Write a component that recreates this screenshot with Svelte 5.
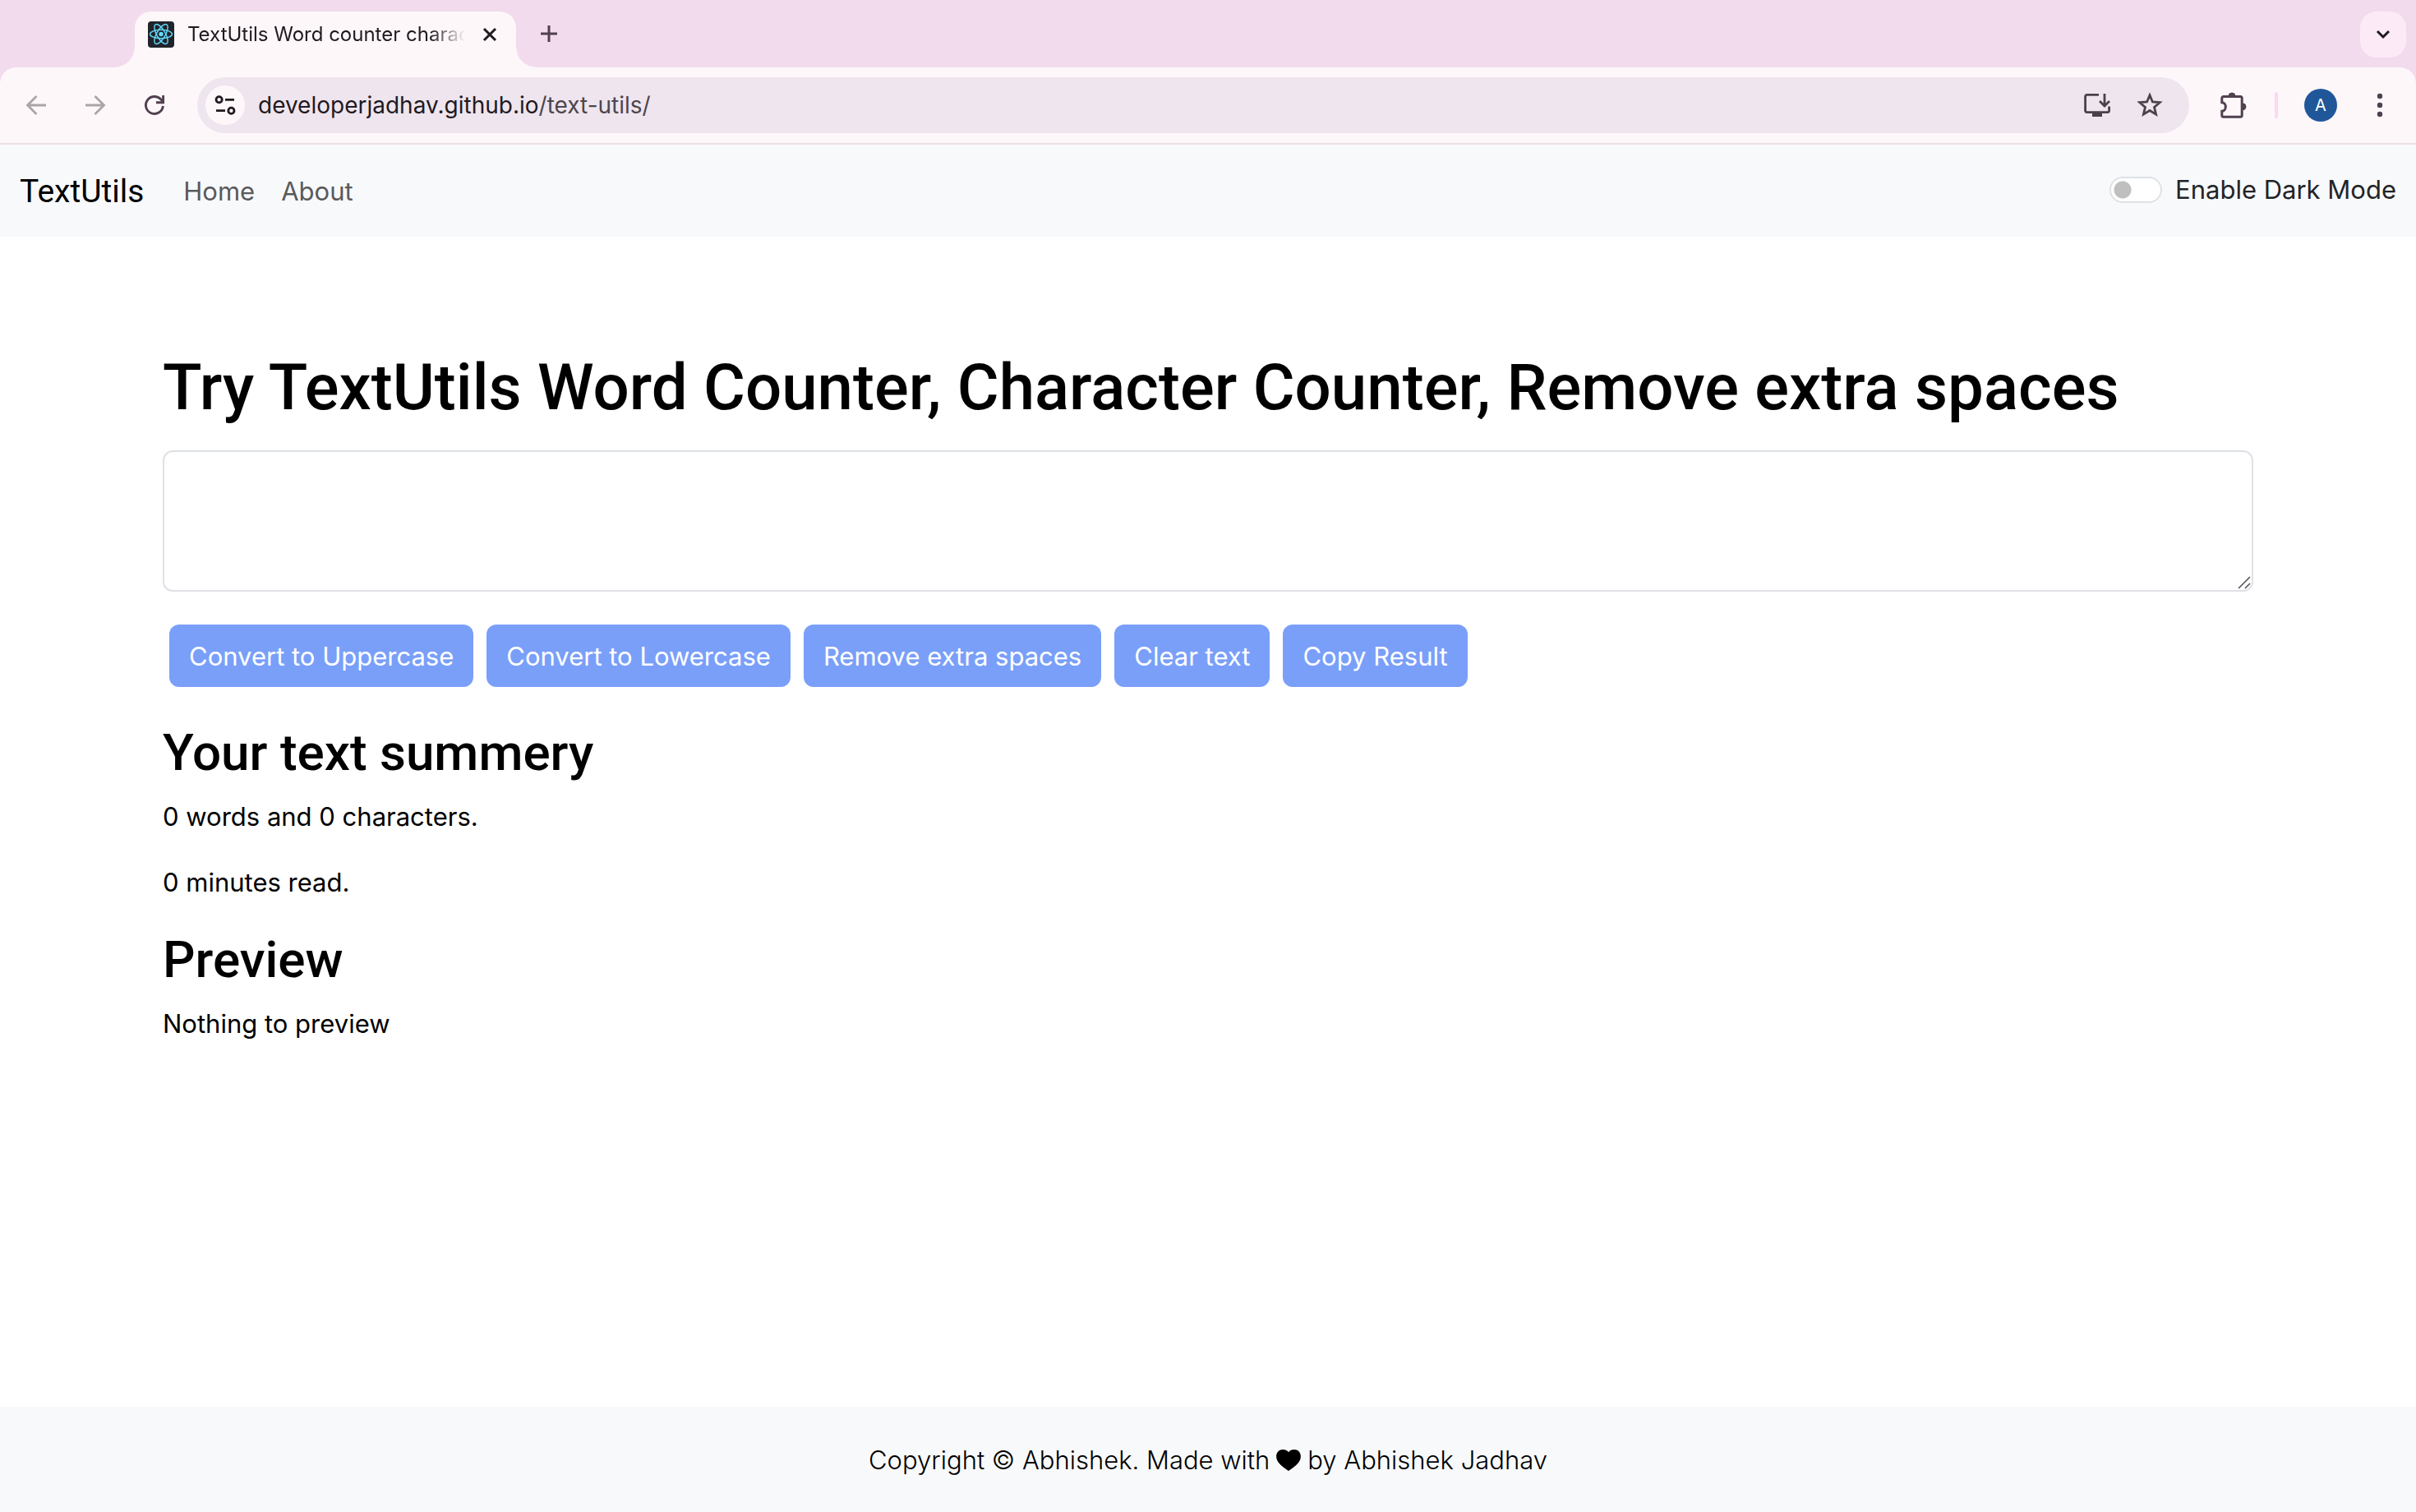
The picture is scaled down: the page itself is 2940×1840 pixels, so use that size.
<script>
  let text = $state('');
  let dark = $state(false);

  const words = $derived(text.split(/\s+/).filter(Boolean).length);
  const minutes = $derived(0.008 * words);

  const actions = [
    { label: 'Convert to Uppercase', run: () => (text = text.toUpperCase()) },
    { label: 'Convert to Lowercase', run: () => (text = text.toLowerCase()) },
    { label: 'Remove extra spaces', run: () => (text = text.split(/[ ]+/).join(' ')) },
    { label: 'Clear text', run: () => (text = '') },
    { label: 'Copy Result', run: () => navigator.clipboard?.writeText(text) }
  ];
</script>

<div class="window">
  <div class="tabstrip">
    <div class="tab">
      <svg class="favicon" viewBox="0 0 32 32" aria-hidden="true">
        <rect width="32" height="32" rx="4" fill="#20232a" />
        <g fill="none" stroke="#61dafb" stroke-width="1.4">
          <ellipse cx="16" cy="15.5" rx="13.5" ry="5.2" />
          <ellipse cx="16" cy="15.5" rx="13.5" ry="5.2" transform="rotate(60 16 15.5)" />
          <ellipse cx="16" cy="15.5" rx="13.5" ry="5.2" transform="rotate(120 16 15.5)" />
        </g>
        <circle cx="16" cy="15.5" r="2.7" fill="#61dafb" />
      </svg>
      <span class="tab-title">TextUtils Word counter charac</span>
      <button class="icon close" aria-label="Close tab">
        <svg viewBox="0 0 32 32"><path d="M9 9l14 14M23 9L9 23" stroke="#1f1a1f" stroke-width="3" /></svg>
      </button>
    </div>
    <button class="icon new-tab" aria-label="New tab">
      <svg viewBox="0 0 32 32"><path d="M16 6v20M6 16h20" stroke="#51404f" stroke-width="3" /></svg>
    </button>
    <button class="tab-search" aria-label="Search tabs">
      <svg viewBox="0 0 32 32"><path d="M9 12l7 7 7-7" stroke="#1f1a1f" stroke-width="3" /></svg>
    </button>
  </div>

  <div class="toolbar">
    <div class="nav-buttons">
      <button class="icon" aria-label="Back" disabled>
        <svg viewBox="0 0 32 32"><path d="M28 16H6M16.5 5L5.5 16l11 11" stroke="#ada4a9" stroke-width="2.8" /></svg>
      </button>
      <button class="icon" aria-label="Forward" disabled>
        <svg viewBox="0 0 32 32"><path d="M4 16h22M15.5 5l11 11-11 11" stroke="#ada4a9" stroke-width="2.8" /></svg>
      </button>
      <button class="icon" aria-label="Reload">
        <svg viewBox="0 0 32 32">
          <path d="M26.4 17A10.5 10.5 0 1 1 23.6 8.8L26 11.2" stroke="#51404f" stroke-width="2.9" />
          <path d="M18 12.7h8.6V4" stroke="#51404f" stroke-width="2.9" />
        </svg>
      </button>
    </div>

    <div class="omnibox">
      <button class="site-info" aria-label="View site information">
        <svg viewBox="0 0 32 32">
          <g stroke="#1f1a1f" stroke-width="2.8">
            <circle cx="8.6" cy="9.3" r="3.6" />
            <path d="M16 9.3h11M5 22.7h11" />
            <circle cx="23.4" cy="22.7" r="3.6" />
          </g>
        </svg>
      </button>
      <a class="url" href="#top">developerjadhav.github.io<span>/text-utils/</span></a>
      <button class="icon" aria-label="Install app">
        <svg viewBox="0 0 32 32">
          <path d="M18 3.4H3.6a2 2 0 0 0-2 2V22.6a2 2 0 0 0 2 2H28.6a2 2 0 0 0 2-2V17.5" stroke="#4a4248" stroke-width="2.8" />
          <path d="M10 25h12v5H10z" fill="#4a4248" />
          <path d="M25 2v14M19 11l6 6 6-6" stroke="#4a4248" stroke-width="2.8" />
        </svg>
      </button>
      <button class="icon" aria-label="Bookmark this tab">
        <svg viewBox="0 0 32 32">
          <path d="M16 3.8l3.4 8.2 8.8.7-6.7 5.7 2.1 8.7L16 22.5l-7.6 4.6 2.1-8.7-6.7-5.7 8.8-.7z" stroke="#4a4248" stroke-width="2.8" />
        </svg>
      </button>
    </div>

    <button class="icon puzzle" aria-label="Extensions">
      <svg viewBox="0 0 32 32">
        <path d="M3.8 5.4H24.2a2 2 0 0 1 2 2V28.2a2 2 0 0 1-2 2H3.8a2 2 0 0 1-2-2V23.2c6 0 6-10.5 0-10.5V7.4a2 2 0 0 1 2-2z" stroke="#51404f" stroke-width="3" />
        <path d="M10 5a4 4 0 0 1 8 0zM27 13.8a4 4 0 0 1 0 8z" fill="#51404f" stroke="#51404f" />
      </svg>
    </button>
    <span class="separator"></span>
    <button class="avatar" aria-label="Profile">A</button>
    <button class="icon" aria-label="Browser menu">
      <svg viewBox="0 0 32 32"><g fill="#51404f"><circle cx="16" cy="5" r="3.2" /><circle cx="16" cy="16" r="3.2" /><circle cx="16" cy="27" r="3.2" /></g></svg>
    </button>
  </div>

  <div class="page" class:dark id="top">
    <nav class="navbar">
      <a class="brand" href="#top">TextUtils</a>
      <a class="nav-link" href="#home">Home</a>
      <a class="nav-link" href="#about">About</a>
      <label class="switch">
        <input type="checkbox" role="switch" bind:checked={dark} />
        <span>Enable Dark Mode</span>
      </label>
    </nav>

    <main>
      <h1><label for="box">Try TextUtils Word Counter, Character Counter, Remove extra spaces</label></h1>
      <div class="field">
        <textarea id="box" bind:value={text}></textarea>
        <svg class="grip" viewBox="0 0 16 16" aria-hidden="true"><path d="M1 15L15 1M9 15l6-6" stroke="#555" stroke-width="1.6" /></svg>
      </div>
      <div class="actions">
        {#each actions as action}
          <button disabled={text.length === 0} onclick={action.run}>{action.label}</button>
        {/each}
      </div>
      <h2>Your text summery</h2>
      <p>{words} words and {text.length} characters.</p>
      <p>{minutes} minutes read.</p>
      <h2>Preview</h2>
      <p>{text || 'Nothing to preview'}</p>
    </main>

    <footer>
      <span>Copyright © Abhishek. Made with</span>
      <svg viewBox="0 0 32 28" role="img" aria-label="love"><path d="M16 28C11 24 0 18.5 0 8.8 0 3.8 3.8 0 8.4 0 11.6 0 14.4 1.2 16 3.4 17.6 1.2 20.4 0 23.6 0 28.2 0 32 3.8 32 8.8 32 18.5 21 24 16 28z" /></svg>
      <span>by Abhishek Jadhav</span>
    </footer>
  </div>
</div>

<style>
  :global(body) {
    margin: 0;
    font-family: Inter, 'Liberation Sans', sans-serif;
  }

  .window {
    min-height: 100vh;
    display: flex;
    flex-direction: column;
    background: #f2dbec;
  }

  button {
    font: inherit;
    border: 0;
    padding: 0;
    background: none;
  }

  svg {
    display: block;
    fill: none;
  }

  a {
    color: inherit;
    text-decoration: none;
  }

  .icon,
  .icon svg {
    width: 32px;
    height: 32px;
    flex: none;
  }

  /* Tab strip */
  .tabstrip {
    display: flex;
    align-items: center;
    height: 68px;
    padding: 14px 12px 0 164px;
  }

  .tab {
    position: relative;
    box-sizing: border-box;
    align-self: stretch;
    width: 464px;
    display: flex;
    align-items: center;
    padding: 0 16px 12px;
    border-radius: 20px 20px 0 0;
    background: #fdf7fa;
  }

  .tab::before,
  .tab::after {
    content: '';
    position: absolute;
    bottom: 0;
    width: 24px;
    height: 24px;
  }

  .tab::before {
    right: 100%;
    background: radial-gradient(circle at 0 0, transparent 23px, #fdf7fa 24px);
  }

  .tab::after {
    left: 100%;
    background: radial-gradient(circle at 100% 0, transparent 23px, #fdf7fa 24px);
  }

  .favicon {
    width: 32px;
    height: 32px;
    flex: none;
  }

  .tab-title {
    flex: 1;
    min-width: 0;
    margin-left: 16px;
    white-space: nowrap;
    font-size: 24px;
    line-height: 32px;
    color: #1f1a1f;
    mask-image: linear-gradient(to right, #000 84%, transparent 96%);
  }

  .new-tab {
    margin: 0 auto 14px 24px;
  }

  .tab-search {
    width: 56px;
    height: 56px;
    margin-bottom: 12px;
    display: grid;
    place-items: center;
    border-radius: 20px;
    background: #fcebf6;
  }

  .tab-search svg {
    width: 32px;
    height: 32px;
  }

  /* Toolbar */
  .toolbar {
    display: flex;
    align-items: center;
    padding: 12px 28px;
    border-bottom: 2px solid #ebdfe5;
    border-radius: 20px 20px 0 0;
    background: #fdf7fa;
  }

  .nav-buttons {
    display: flex;
    gap: 40px;
    margin-right: 36px;
  }

  .omnibox {
    flex: 1;
    display: flex;
    align-items: center;
    gap: 32px;
    box-sizing: border-box;
    height: 68px;
    padding: 0 32px 0 10px;
    border-radius: 34px;
    background: #efe5ee;
  }

  .site-info {
    width: 48px;
    height: 48px;
    display: grid;
    place-items: center;
    border-radius: 50%;
    background: #fdf7fa;
  }

  .site-info svg {
    width: 32px;
    height: 32px;
  }

  .url {
    flex: 1;
    margin-left: -16px;
    font-size: 28px;
    color: #1f1a1f;
  }

  .url span {
    color: #4e464c;
  }

  .puzzle {
    margin-left: 38px;
  }

  .separator {
    width: 4px;
    height: 32px;
    margin: 0 32px 0 34px;
    border-radius: 2px;
    background: #fad9f3;
  }

  .avatar {
    width: 40px;
    height: 40px;
    margin-right: 36px;
    border-radius: 50%;
    background: #1f5799;
    color: #fff;
    font-size: 20px;
    line-height: 40px;
  }

  /* Page */
  .page {
    flex: 1;
    display: flex;
    flex-direction: column;
    background: #fff;
    color: #000;
    font-size: 31px;
    line-height: 48px;
  }

  .navbar {
    display: flex;
    align-items: center;
    height: 112px;
    padding: 0 24px;
    background: #f8f9fb;
  }

  .brand,
  .nav-link {
    padding-top: 2px;
  }

  .brand {
    margin-right: 48px;
    font-family: Roboto, sans-serif;
    font-size: 39px;
  }

  .nav-link {
    margin-right: 32px;
    color: #595a5b;
  }

  .switch {
    display: flex;
    align-items: center;
    gap: 16px;
    margin-left: auto;
    padding-bottom: 2px;
    color: #212529;
  }

  .switch input {
    appearance: none;
    box-sizing: border-box;
    width: 64px;
    height: 32px;
    margin: 0;
    border: 2px solid #dee2e6;
    border-radius: 16px;
    background: radial-gradient(circle at 14px 14px, #bfbfbf 10px, transparent 11px) #fff;
  }

  .switch input:checked {
    background: radial-gradient(circle at 46px 14px, #fff 10px, transparent 11px) #0d6efd;
  }

  main {
    box-sizing: border-box;
    width: 100%;
    max-width: 2640px;
    margin: 0 auto;
    padding: 136px 48px 64px;
  }

  h1,
  h2,
  p {
    margin: 0;
  }

  h1 {
    margin-bottom: 28px;
    font-family: Roboto, sans-serif;
    font-size: 78px;
    line-height: 96px;
    font-weight: 500;
  }

  .field {
    position: relative;
  }

  textarea {
    display: block;
    box-sizing: border-box;
    width: 100%;
    height: 172px;
    padding: 12px 24px;
    border: 2px solid #dee2e6;
    border-radius: 12px;
    background: #fff;
    font: inherit;
    resize: vertical;
  }

  textarea::-webkit-resizer {
    background: transparent;
  }

  .grip {
    position: absolute;
    right: 3px;
    bottom: 3px;
    width: 16px;
    height: 16px;
    pointer-events: none;
  }

  .actions {
    display: flex;
    flex-wrap: wrap;
    gap: 16px;
    margin: 40px 8px 42px;
  }

  .actions button {
    height: 76px;
    padding: 2px 24px 0;
    border-radius: 12px;
    background: #3d73f7;
    color: #fff;
  }

  .actions button:disabled {
    background: #7a9ff9;
  }

  h2 {
    margin-bottom: 16px;
    font-family: Roboto, sans-serif;
    font-size: 62px;
    line-height: 76px;
    font-weight: 500;
  }

  p {
    margin-bottom: 32px;
  }

  footer {
    display: flex;
    justify-content: center;
    align-items: center;
    gap: 8px;
    box-sizing: border-box;
    height: 128px;
    margin-top: auto;
    padding-top: 2px;
    background: #f8f9fb;
    font-weight: 300;
  }

  footer svg {
    width: 30px;
    height: 26px;
    fill: #000;
  }

  .dark {
    background: #212529;
    color: #fff;
  }
</style>
